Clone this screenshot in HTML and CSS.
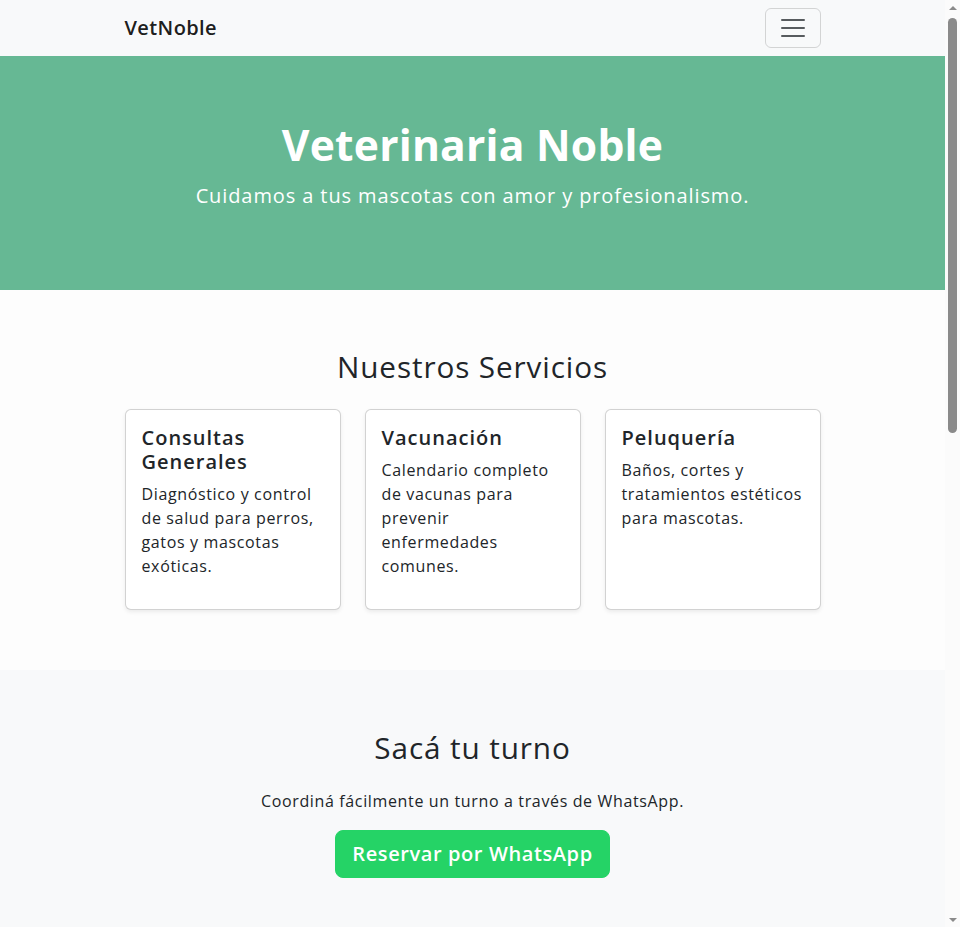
FILE: index.html
```html
<!DOCTYPE html>
<html lang="es">
<head>
<meta charset="utf-8">
<title>VetNoble</title>
<link rel="stylesheet" href="styles.css">
</head>
<body>
<div class="page">
<nav class="navbar">
  <div class="container nav-inner">
    <a class="brand" href="#">VetNoble</a>
    <button class="toggler" aria-label="Menú">
      <svg width="30" height="30" viewBox="0 0 30 30"><path d="M4 7h22M4 15h22M4 23h22" stroke="rgba(33,37,41,0.75)" stroke-width="2" stroke-linecap="round" fill="none"/></svg>
    </button>
  </div>
</nav>

<header class="hero">
  <div class="container">
    <h1 class="hero-title">Veterinaria Noble</h1>
    <p class="lead">Cuidamos a tus mascotas con amor y profesionalismo.</p>
  </div>
</header>

<section class="services">
  <div class="container">
    <h2 class="section-title">Nuestros Servicios</h2>
    <div class="cards">
      <div class="card">
        <h5 class="card-title">Consultas Generales</h5>
        <p class="card-text">Diagnóstico y control de salud para perros, gatos y mascotas exóticas.</p>
      </div>
      <div class="card">
        <h5 class="card-title">Vacunación</h5>
        <p class="card-text">Calendario completo de vacunas para prevenir enfermedades comunes.</p>
      </div>
      <div class="card">
        <h5 class="card-title">Peluquería</h5>
        <p class="card-text">Baños, cortes y tratamientos estéticos para mascotas.</p>
      </div>
    </div>
  </div>
</section>

<section class="booking">
  <div class="container center">
    <h2 class="section-title">Sacá tu turno</h2>
    <p class="booking-text">Coordiná fácilmente un turno a través de WhatsApp.</p>
    <a class="btn-wa" href="#">Reservar por WhatsApp</a>
  </div>
</section>

<section class="contact">
  <div class="container center">
    <h2 class="section-title">Dónde estamos</h2>
    <p class="booking-text">Av. Siempre Viva 742, Buenos Aires</p>
    <div class="map"></div>
  </div>
</section>

<footer class="footer">
  <div class="container center">
    <p>© 2024 Veterinaria Noble. Todos los derechos reservados.</p>
  </div>
</footer>
</div>

<div class="scrollbar" aria-hidden="true">
  <div class="sb-arrow sb-up"></div>
  <div class="sb-track"><div class="sb-thumb"></div></div>
  <div class="sb-arrow sb-down"></div>
</div>
</body>
</html>
```

FILE: styles.css
```css
* { box-sizing: border-box; }
html, body { margin: 0; padding: 0; }
body {
  font-family: "Open Sans", "DejaVu Sans", sans-serif;
  font-size: 16px;
  line-height: 1.5;
  letter-spacing: 0.04em;
  color: #212529;
  background: #fdfdfd;
}
.page { margin-right: 15px; }
h1, h2, h5, p { margin: 0; }
.container {
  width: 720px;
  margin: 0 auto;
  padding: 0 12px;
}
.center { text-align: center; }

.navbar {
  background: #f8f9fa;
  height: 56px;
  display: flex;
  align-items: center;
}
.nav-inner {
  display: flex;
  align-items: center;
  justify-content: space-between;
}
.brand {
  font-size: 20px;
  font-weight: 600;
  letter-spacing: 0.02em;
  color: rgba(0,0,0,0.9);
  text-decoration: none;
  line-height: 30px;
}
.toggler {
  width: 56px;
  height: 40px;
  padding: 4px 12px;
  background: transparent;
  border: 1px solid rgba(0,0,0,0.15);
  border-radius: 6px;
  display: flex;
  align-items: center;
  justify-content: center;
}

.hero {
  background: #66b894;
  color: #fff;
  text-align: center;
  padding: 63px 0 79px;
}
.hero-title {
  font-size: 42.6px;
  font-weight: 700;
  letter-spacing: 0.005em;
  line-height: 1.2;
  margin-bottom: 11px;
}
.lead {
  font-size: 20px;
  line-height: 30px;
  font-weight: 400;
  letter-spacing: 0.045em;
}

.services { padding: 59px 0 60px; }
.section-title {
  font-size: 29.7px;
  font-weight: 400;
  line-height: 1.2;
  letter-spacing: 0.03em;
  text-align: center;
  margin-bottom: 24px;
}
.cards {
  display: grid;
  grid-template-columns: repeat(3, 1fr);
  gap: 24px;
}
.card {
  background: #fff;
  border: 1px solid rgba(0,0,0,0.175);
  border-radius: 6px;
  box-shadow: 0 2px 4px rgba(0,0,0,0.075);
  padding: 16px 16px 0;
  min-height: 201px;
}
.card-title {
  font-size: 20px;
  font-weight: 600;
  line-height: 24px;
  letter-spacing: 0.05em;
  margin-bottom: 8px;
}
.card-text { margin-bottom: 16px; }

.booking {
  background: #f8f9fa;
  padding: 60px 0 60px;
}
.booking-text { margin-bottom: 16px; }
.booking .booking-text { margin-top: 1px; margin-bottom: 17px; }
.btn-wa {
  display: inline-block;
  background: #25d366;
  color: #fff;
  font-size: 20px;
  font-weight: 600;
  line-height: 30px;
  letter-spacing: 0.03em;
  padding: 8px 16px;
  border: 1px solid #25d366;
  border-radius: 8px;
  text-decoration: none;
}

.contact { padding: 60px 0; }
.map {
  height: 450px;
  background: #e9ecef;
  border-radius: 6px;
}
.footer {
  background: #212529;
  color: #fff;
  padding: 24px 0;
}

/* imitation of the browser's classic scrollbar seen in the reference */
.scrollbar {
  position: fixed;
  top: 0;
  right: 0;
  width: 15px;
  height: 100vh;
  background: #fbfbfb;
  display: flex;
  flex-direction: column;
}
.sb-arrow {
  height: 15px;
  display: flex;
  align-items: center;
  justify-content: center;
}
.sb-up::before, .sb-down::before {
  content: "";
  width: 0;
  height: 0;
  border-left: 4px solid transparent;
  border-right: 4px solid transparent;
}
.sb-up::before { border-bottom: 4px solid #8a8a8a; }
.sb-down::before { border-top: 4px solid #8a8a8a; }
.sb-track {
  flex: 1;
  padding: 3px 3px 0;
}
.sb-thumb {
  height: 415px;
  background: #8a8a8a;
  border-radius: 5px;
}
```
